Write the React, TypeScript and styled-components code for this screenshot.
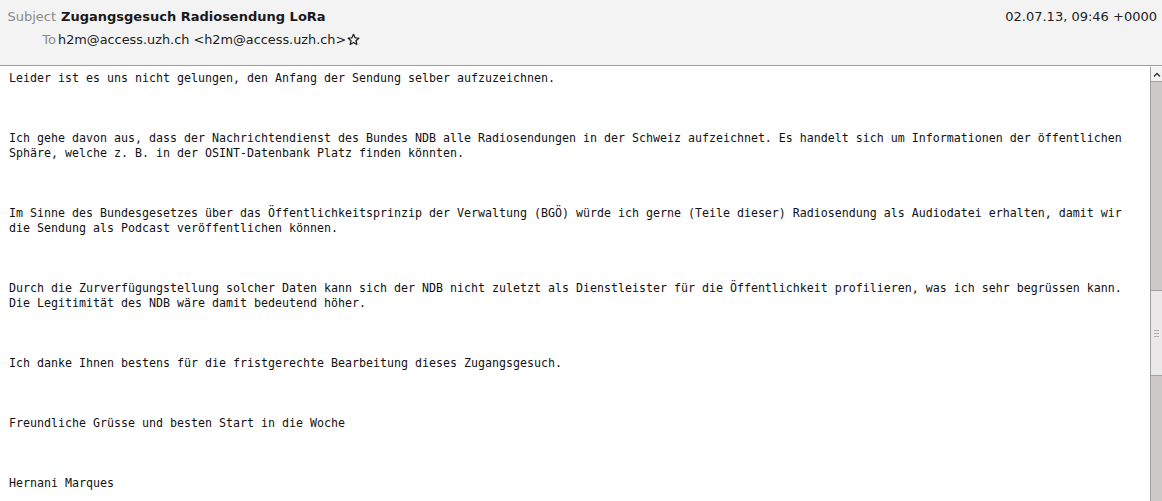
import React from 'react'
import styled, { createGlobalStyle } from 'styled-components'

const GlobalStyle = createGlobalStyle`
    html, body {
        margin: 0;
        padding: 0;
        background: #ffffff;
        overflow: hidden;
    }
`

const Window = styled.div`
    width: 1162px;
    height: 501px;
    display: flex;
    flex-direction: column;
    font-family: "DejaVu Sans", sans-serif;
    overflow: hidden;
`

const Header = styled.div`
    height: 66px;
    flex: none;
    background: #f3f3f3;
    border-bottom: 1px solid #a19e9e;
    box-sizing: border-box;
    padding: 6px 5px 0 0;
    display: grid;
    grid-template-columns: 56px 1fr auto;
    grid-template-rows: 20px 26px;
    column-gap: 5px;
    align-items: center;
    font-size: 13px;
`

const Label = styled.span`
    color: #8a8a8a;
    text-align: right;
`

const Subject = styled.span`
    font-weight: bold;
    color: #1a1a1a;
`

const Recipient = styled.span`
    display: flex;
    align-items: center;
    gap: 1px;
    color: #222;
    margin-left: -3px;
    font-size: 12.85px;
`

const DateText = styled.span`
    color: #222;
    text-align: right;
`

const Main = styled.div`
    flex: 1;
    display: flex;
    min-height: 0;
`

const Body = styled.div`
    flex: 1;
    padding: 5px 9px;
    font-family: "DejaVu Sans Mono", monospace;
    font-size: 11.63px;
    line-height: 15px;
    color: #111;
    white-space: pre-wrap;
    overflow: hidden;
`

const Para = styled.p`
    margin: 0 0 45px 0;
`

const Scrollbar = styled.div`
    width: 12px;
    flex: none;
    margin-top: 1px;
    display: flex;
    flex-direction: column;
    background: #cdc9c9;
    border-left: 1px solid #a39f9f;
    box-sizing: border-box;
`

const Arrow = styled.div`
    height: 15px;
    flex: none;
    box-sizing: border-box;
    background: #f4f4f4;
    border-bottom: 1px solid #a39f9f;
    display: flex;
    align-items: center;
    justify-content: center;
`

const Track = styled.div<{ $size: number }>`
    height: ${p => p.$size}px;
    flex: none;
`

const Thumb = styled.div`
    height: 86px;
    flex: none;
    background: #eae8e8;
    border-top: 1px solid #a39f9f;
    border-bottom: 1px solid #a39f9f;
    box-sizing: border-box;
    display: flex;
    flex-direction: column;
    align-items: center;
    justify-content: center;
    gap: 2px;
`

const Grip = styled.div`
    width: 5px;
    height: 1px;
    background: #b0adad;
`

const paragraphs = [
    'Leider ist es uns nicht gelungen, den Anfang der Sendung selber aufzuzeichnen.',
    'Ich gehe davon aus, dass der Nachrichtendienst des Bundes NDB alle Radiosendungen in der Schweiz aufzeichnet. Es handelt sich um Informationen der öffentlichen\nSphäre, welche z. B. in der OSINT-Datenbank Platz finden könnten.',
    'Im Sinne des Bundesgesetzes über das Öffentlichkeitsprinzip der Verwaltung (BGÖ) würde ich gerne (Teile dieser) Radiosendung als Audiodatei erhalten, damit wir\ndie Sendung als Podcast veröffentlichen können.',
    'Durch die Zurverfügungstellung solcher Daten kann sich der NDB nicht zuletzt als Dienstleister für die Öffentlichkeit profilieren, was ich sehr begrüssen kann.\nDie Legitimität des NDB wäre damit bedeutend höher.',
    'Ich danke Ihnen bestens für die fristgerechte Bearbeitung dieses Zugangsgesuch.',
    'Freundliche Grüsse und besten Start in die Woche',
    'Hernani Marques',
]

const Star = () => (
    <svg width="13" height="13" viewBox="0 0 24 24" fill="none" stroke="#222" strokeWidth="2.4" strokeLinejoin="round">
        <polygon points="12,2.5 14.9,8.9 21.8,9.6 16.6,14.3 18.1,21.2 12,17.6 5.9,21.2 7.4,14.3 2.2,9.6 9.1,8.9" />
    </svg>
)

const App = () => {
    return (
        <Window>
            <GlobalStyle />
            <Header>
                <Label>Subject</Label>
                <Subject>Zugangsgesuch Radiosendung LoRa</Subject>
                <DateText>02.07.13, 09:46 +0000</DateText>
                <Label>To</Label>
                <Recipient>
                    h2m@access.uzh.ch &lt;h2m@access.uzh.ch&gt;
                    <Star />
                </Recipient>
                <span />
            </Header>
            <Main>
                <Body>
                    {paragraphs.map((text, i) => (
                        <Para key={i}>{text}</Para>
                    ))}
                </Body>
                <Scrollbar>
                    <Arrow>
                        <svg width="8" height="5" viewBox="0 0 8 5">
                            <path d="M1 4.5 L4 1.5 L7 4.5" fill="none" stroke="#333" strokeWidth="1.4" />
                        </svg>
                    </Arrow>
                    <Track $size={208} />
                    <Thumb>
                        <Grip />
                        <Grip />
                        <Grip />
                    </Thumb>
                </Scrollbar>
            </Main>
        </Window>
    )
}

export default App
